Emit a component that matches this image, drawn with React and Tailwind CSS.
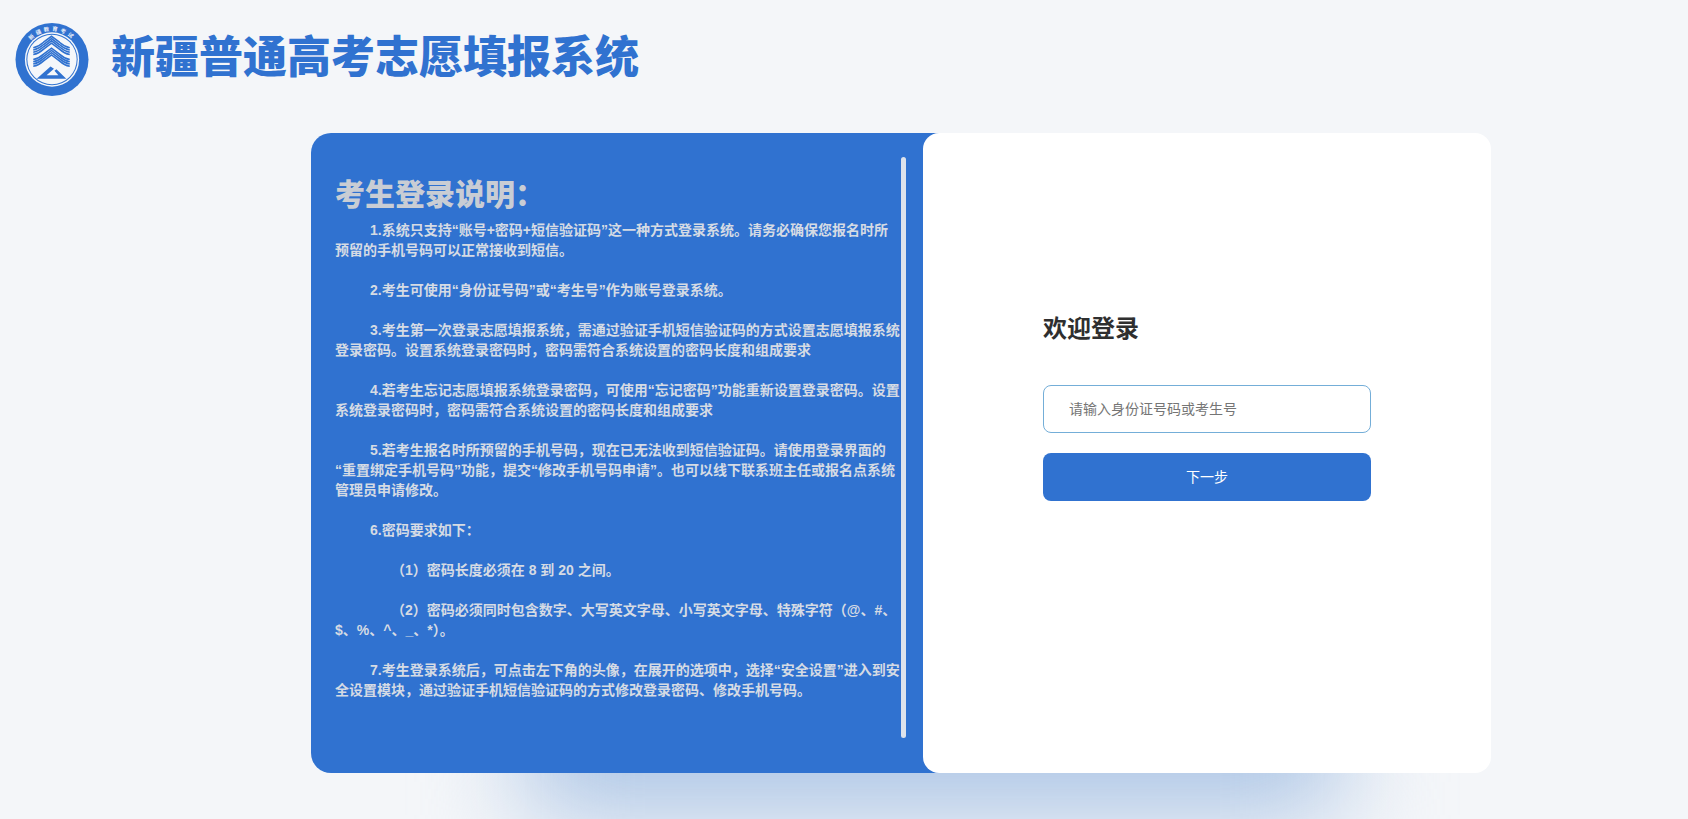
const P1 = [
  ["1.系统只支持“账号+密码+短信验证码”这一种方式登录系统。请务必确保您报名时所预留的手机号码可以正常接收到短信。", 1],
  ["2.考生可使用“身份证号码”或“考生号”作为账号登录系统。", 1],
  ["3.考生第一次登录志愿填报系统，需通过验证手机短信验证码的方式设置志愿填报系统登录密码。设置系统登录密码时，密码需符合系统设置的密码长度和组成要求", 1],
  ["4.若考生忘记志愿填报系统登录密码，可使用“忘记密码”功能重新设置登录密码。设置系统登录密码时，密码需符合系统设置的密码长度和组成要求", 1],
  ["5.若考生报名时所预留的手机号码，现在已无法收到短信验证码。请使用登录界面的“重置绑定手机号码”功能，提交“修改手机号码申请”。也可以线下联系班主任或报名点系统管理员申请修改。", 1],
  ["6.密码要求如下：", 1],
  ["（1）密码长度必须在 8 到 20 之间。", 2],
  ["（2）密码必须同时包含数字、大写英文字母、小写英文字母、特殊字符（@、#、$、%、^、_、*）。", 2],
  ["7.考生登录系统后，可点击左下角的头像，在展开的选项中，选择“安全设置”进入到安全设置模块，通过验证手机短信验证码的方式修改登录密码、修改手机号码。", 1],
];

function Roof({ y }) {
  return (
    <g fill="none" stroke="#3072d0" strokeWidth="1.6">
      {[0, 2.3, 4.6, 6.9].map((d) => (
        <path key={d} d={`M18.5 ${y + 11.5 + d} Q24 ${y + 10.5 + d} 29 ${y + 6 + d} L37 ${y + d} L45 ${y + 6 + d} Q50 ${y + 10.5 + d} 55.5 ${y + 11.5 + d}`} />
      ))}
    </g>
  );
}

function Logo() {
  return (
    <svg viewBox="0 0 75 75" className="w-[74px] h-[75px] shrink-0">
      <circle cx="37.5" cy="37.5" r="37" fill="#3072d0" />
      <circle cx="37.5" cy="37.5" r="27.5" fill="#f5f7fa" />
      <circle cx="37.5" cy="37.5" r="26" fill="#3072d0" />
      <circle cx="37.5" cy="37.5" r="25" fill="#f5f7fa" />
      <defs>
        <path id="logo-arc" d="M8.5 37.5 A29 29 0 0 1 66.5 37.5" />
      </defs>
      <text fontSize="5.5" fontWeight="700" fill="#e8eef8" fontFamily='"Noto Sans CJK SC", sans-serif'>
        <textPath href="#logo-arc" startOffset="50%" textAnchor="middle" letterSpacing="2.6">新疆教育考试</textPath>
      </text>
      <Roof y={14} />
      <Roof y={26} />
      <path d="M22 57 L36 44.5 L39.5 47 L32 53.5 H44 L40 49 L42 47.5 L52 57 Z" fill="#3072d0" />
    </svg>
  );
}

export default function App() {
  return (
    <div lang="zh-CN" className="relative h-[819px] overflow-hidden bg-[#f4f6f9] font-['Liberation_Sans','Noto_Sans_CJK_SC',sans-serif]">
      <header className="flex items-center h-[75px] pt-[22px] box-content pl-[15px] gap-[22px]">
        <Logo />
        <h1 className="text-[44px] leading-[60px] font-black text-[#3072d0] whitespace-nowrap mb-1">新疆普通高考志愿填报系统</h1>
      </header>

      <div className="absolute left-[525px] top-[600px] w-[815px] h-[215px] bg-[#acc5e5] blur-[50px]" />

      <main className="relative flex w-[1180px] h-[640px] ml-[311px] mt-9">
        <section className="flex w-[660px] h-full rounded-[20px] bg-[#3072d0] pl-6 pt-6">
          <div className="w-[566px] shrink-0 pt-4">
            <h2 className="text-[30px] leading-[44px] font-black text-[#c9cdd4]">考生登录说明：</h2>
            <div className="text-[14px] leading-5 font-bold text-[#d5dbe4] mt-[3px] flex flex-col gap-5">
              {P1.map(([t, lv]) => (
                <p key={t} className={lv === 2 ? "indent-[56px]" : "indent-[35px]"}>{t}</p>
              ))}
            </div>
          </div>
          <div className="w-[5px] h-[581px] rounded-full bg-[#dde3ec]" />
        </section>
        <section className="relative flex flex-col w-[568px] h-full -ml-12 rounded-2xl bg-white pl-[120px] pt-[176px]">
          <h2 className="text-[24px] leading-[40px] font-bold text-[#2f2f2f]">欢迎登录</h2>
          <input
            placeholder="请输入身份证号码或考生号"
            className="mt-9 w-[328px] h-[48px] rounded-lg border border-[#74aed8] pl-[25px] text-[14px] outline-none placeholder:text-[#757575]"
          />
          <button className="mt-5 w-[328px] h-[48px] rounded-lg bg-[#3072d0] text-[14px] text-white">下一步</button>
        </section>
      </main>
    </div>
  );
}
